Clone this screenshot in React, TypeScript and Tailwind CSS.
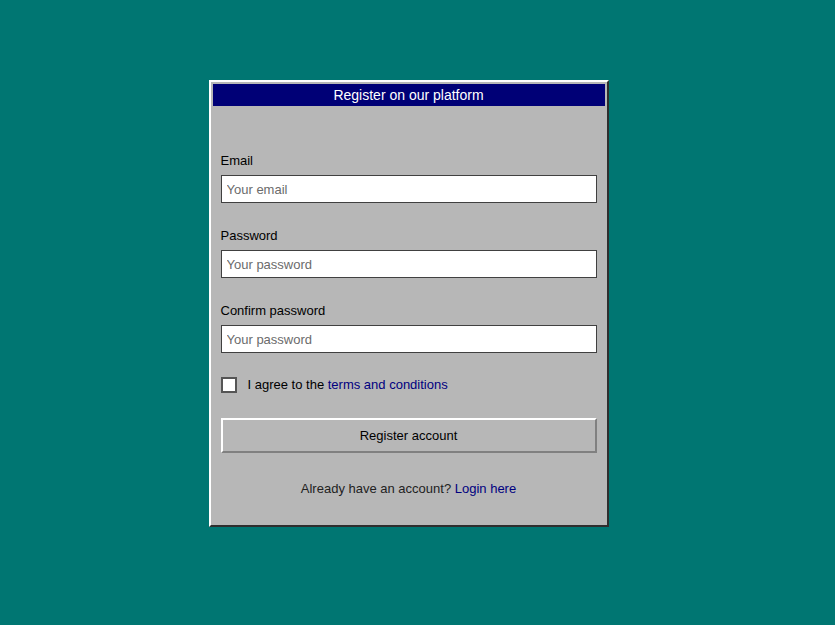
import { useState } from 'react'

function Field({ label, placeholder, type }: { label: string; placeholder: string; type: string }) {
  return (
    <div className="flex flex-col">
      <label className="text-[13px] leading-[22px] text-black mb-[3px]">{label}</label>
      <input
        type={type}
        placeholder={placeholder}
        className="h-[28px] w-full border border-[#404040] bg-white px-[5px] text-[13px] text-black placeholder:text-[#6b6b6b] outline-none"
      />
    </div>
  )
}

export default function App() {
  const [agreed, setAgreed] = useState(false)

  return (
    <div
      className="min-h-screen w-full bg-[#007672] flex justify-center pt-[80px] pr-[18px]"
      style={{ fontFamily: '"Liberation Sans", Arial, sans-serif' }}
    >
      <div className="w-[400px] h-[447px] border-2 border-t-white border-l-white border-r-[#2e2e2e] border-b-[#2e2e2e] bg-[#b7b7b7] p-[2px] flex flex-col">
        <div className="h-[22px] bg-[#000076] text-white text-[14px] leading-[22px] text-center">
          Register on our platform
        </div>

        <div className="px-2 pt-[44px] flex flex-col gap-[22px]">
          <Field label="Email" placeholder="Your email" type="email" />
          <Field label="Password" placeholder="Your password" type="password" />
          <Field label="Confirm password" placeholder="Your password" type="password" />
        </div>

        <div className="px-2 mt-[22px] flex items-center gap-[11px] text-[13px] leading-5 text-black">
          <button
            onClick={() => setAgreed(!agreed)}
            className="w-4 h-4 border-2 border-[#555] bg-white flex items-center justify-center text-[11px] leading-none"
          >
            {agreed ? '✓' : ''}
          </button>
          <span>
            I agree to the <a href="#" className="text-[#000080]">terms and conditions</a>
          </span>
        </div>

        <div className="px-2 mt-[23px]">
          <button className="w-full h-[35px] border-2 border-t-white border-l-white border-r-[#808080] border-b-[#808080] bg-[#b7b7b7] text-[13px] text-black">
            Register account
          </button>
        </div>

        <p className="mt-[26px] text-center text-[13px] leading-5 text-[#222]">
          Already have an account? <a href="#" className="text-[#000080]">Login here</a>
        </p>
      </div>
    </div>
  )
}
